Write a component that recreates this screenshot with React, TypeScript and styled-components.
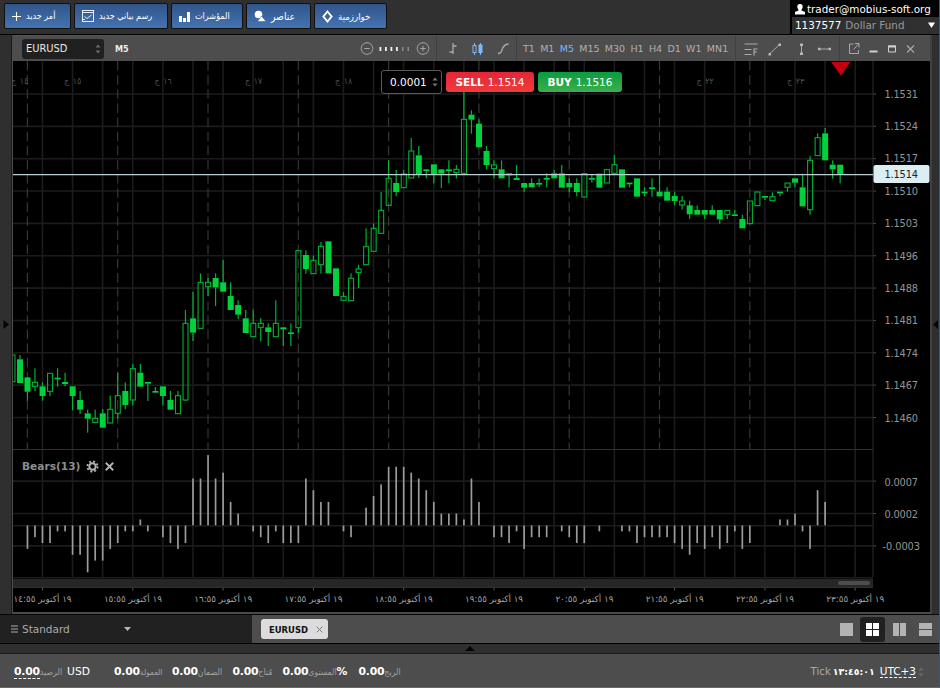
import React from "react";
import styled, { createGlobalStyle } from "styled-components";

const latin = `"DejaVu Sans", Verdana, sans-serif`;
const narrow = `"DejaVu Sans Condensed", "DejaVu Sans", Verdana, sans-serif`;

const Global = createGlobalStyle`
  * { box-sizing: border-box; }
  html, body { margin: 0; padding: 0; background: #2e2e2e; }
  body { font-family: ${latin}; overflow: hidden; }
`;

/* ---------- page shell ---------- */
const Page = styled.div`
  width: 940px; height: 688px; display: flex; flex-direction: column;
  background: #2e2e2e; border-right: 1px solid #2c5c86; border-bottom: 1px solid #3c74a4;
`;
const TopBar = styled.header`
  height: 35px; flex: none; display: flex; justify-content: space-between;
  background: #303030; border-bottom: 1px solid #000;
`;
const ButtonGroup = styled.div`
  display: flex; gap: 3px; padding: 3px 0 0 4px;
`;
const MenuButton = styled.button<{ $w: number; $fs: number; $gap: number }>`
  width: ${(p) => p.$w}px; height: 26px; padding: 0 0 0 7px; display: flex; align-items: center; gap: ${(p) => p.$gap}px;
  border: 1px solid #101010; border-radius: 2px;
  background: linear-gradient(#30558a, #4573b0); color: #fff;
  font: ${(p) => p.$fs}px ${narrow}; font-stretch: condensed; white-space: nowrap;
  svg { flex: none; }
`;
const Account = styled.div`
  width: 149px; display: flex; flex-direction: column; color: #fff; border-left: 2px solid #000;
`;
const AccountMail = styled.div`
  height: 17px; background: #000; display: flex; align-items: center; gap: 2px; padding-left: 3px;
  font-size: 10.4px; white-space: nowrap;
`;
const AccountFund = styled.div`
  flex: 1; display: flex; align-items: center; gap: 4px; padding: 0 4px 2px 3px; font-size: 10.4px; color: #989898;
  b { color: #fff; font-weight: 400; }
  svg { margin-left: auto; }
`;
const Middle = styled.main`
  height: 579px; flex: none; display: flex;
`;
const SideHandle = styled.div<{ $w: number; $line: string }>`
  width: ${(p) => p.$w}px; display: flex; align-items: center; justify-content: center;
  background: #2f2f2f; border-right: 1px solid ${(p) => p.$line};
`;
const ChartWindow = styled.section`
  width: 920px; flex: none; display: flex; flex-direction: column; background: #000;
  border-left: 1px solid #4d4d4d; border-right: 2px solid #404040; border-bottom: 2px solid #4a4a4a;
`;
const ChartHeader = styled.div`
  height: 26px; flex: none; display: flex; background: #4d4d4d; border-top: 1px solid #555;
`;
const HeaderSection = styled.div<{ $w: number }>`
  width: ${(p) => p.$w}px; display: flex; align-items: center; border-right: 1px solid #414141;
  &:last-child { border-right: 0; }
`;
const SymbolSelect = styled.div`
  width: 82px; height: 20px; margin-left: 9px; padding: 0 3px 0 4px; display: flex; align-items: center;
  justify-content: space-between; border-radius: 3px; background: #202020; color: #e8e8e8; font-size: 9.9px;
`;
const Period = styled.span`
  margin-left: 11px; color: #ececec; font: 700 9px ${narrow}; font-stretch: condensed;
`;
const ZoomScale = styled.svg`
  margin: 0 6px 0 auto;
`;
const Timeframe = styled.span<{ $on?: boolean }>`
  color: ${(p) => (p.$on ? "#7fb8f4" : "#b0b0b0")}; font-size: 9.5px;
`;
const Timeframes = styled.div`
  display: flex; gap: 5.3px; padding-left: 6px;
`;
const ChartBody = styled.div`
  position: relative; height: 551px; overflow: hidden;
  > svg { display: block; }
`;
const TradePanel = styled.div`
  position: absolute; left: 368px; top: 9px; display: flex; gap: 4px; align-items: center;
`;
const Volume = styled.div`
  width: 61px; height: 24px; padding: 0 3px 0 8px; display: flex; align-items: center; justify-content: space-between;
  border: 1px solid #5a5a5a; border-radius: 3px; background: #000; color: #fff; font-size: 10.5px;
`;
const TradeButton = styled.button<{ $w: number; $bg: string }>`
  width: ${(p) => p.$w}px; height: 20px; padding: 0; border: 0; border-radius: 3px; background: ${(p) => p.$bg};
  display: flex; align-items: center; justify-content: center; gap: 4px;
  color: #fff; font: 10.5px ${latin};
  b { font-weight: 700; }
`;
const IndicatorLabel = styled.div`
  position: absolute; left: 9px; top: 397px; height: 16px; display: flex; align-items: center; gap: 6px;
  color: #8d8d8d; font: 700 10.6px ${latin};
`;
const TabRow = styled.div`
  height: 30px; flex: none; display: flex; background: #4d4d4d; border-bottom: 1px solid #000; border-top: 1px solid #080808;
`;
const Workspace = styled.div`
  width: 252px; display: flex; align-items: center; padding-left: 11px; background: #212121; color: #aaa; font-size: 10.5px;
  span { margin-left: 4px; width: 102px; }
`;
const ChartTab = styled.div`
  width: 67px; height: 20px; margin: 4px 0 0 9px; padding: 0 5px 0 8px; display: flex; align-items: center;
  justify-content: space-between; border-radius: 3px; background: #dcdcdc; color: #111;
  font: 700 9.4px ${narrow}; font-stretch: condensed;
`;
const LayoutPicker = styled.div`
  margin-left: auto; display: flex; align-items: center; gap: 1px; padding: 0 1px 0 0;
`;
const LayoutOption = styled.div<{ $on?: boolean }>`
  width: 25.3px; height: 25px; display: flex; align-items: center; justify-content: center; border-radius: 3px;
  background: ${(p) => (p.$on ? "#212121" : "transparent")};
`;
const Splitter = styled.div`
  height: 10px; flex: none; display: flex; justify-content: center; align-items: center; background: #2f2f2f; border-bottom: 1px solid #1a1a1a;
`;
const StatusBar = styled.footer`
  flex: 1; display: flex; align-items: center; padding: 2px 15px 0 14px; background: #4d4d4d; color: #fff; font-size: 10.7px;
`;
const Metric = styled.div<{ $w: number }>`
  width: ${(p) => p.$w}px; display: flex; align-items: center; white-space: nowrap;
  b { font: 700 10.8px ${latin}; letter-spacing: -0.2px; }
`;
const MetricName = styled.span<{ $fs: number }>`
  color: #a3a3a3; font: ${(p) => p.$fs}px ${narrow}; font-stretch: condensed; direction: rtl;
`;
const Currency = styled.span`
  margin-left: 5px;
`;
const Underlined = styled.span`
  border-bottom: 1px dashed #fff; line-height: 12px;
`;
const Clock = styled.div`
  margin-left: auto; display: flex; align-items: center; gap: 2px; color: #a8a8a8; font-size: 10.2px;
  b { color: #fff; font: 700 9.4px ${latin}; margin-right: 3px; }
  ${Underlined} { color: #fff; font-size: 10.5px; }
`;

/* ---------- icons ---------- */
const Spinner = ({ c = "#6a6a6a" }: { c?: string }) => (
  <svg width="6" height="10" viewBox="0 0 6 10"><path d="M3 0.5 5.5 3.5h-5zM3 9.5 5.5 6.5h-5z" fill={c} /></svg>
);
const Cross = ({ s, c, w = 1.3 }: { s: number; c: string; w?: number }) => (
  <svg width={s} height={s} viewBox="0 0 8 8"><path d="M.7.7 7.3 7.3M7.3.7.7 7.3" stroke={c} strokeWidth={w} fill="none" /></svg>
);

const menu = [
  { label: "أمر جديد", w: 67, fs: 9, gap: 5, icon: <svg width="9" height="10"><path d="M0 5.5h9M4.500 1v9" stroke="#fff" strokeWidth="1.100" /></svg> },
  { label: "رسم بياني جديد", w: 94, fs: 9, gap: 5, icon: <svg width="12" height="12" fill="none" stroke="#e6eefa"><rect x=".5" y=".5" width="11" height="11" /><path d="M1 2.500h10M2.500 6.500 5 8.500 9.500 5M1 9.500h2" /></svg> },
  { label: "المؤشرات", w: 72, fs: 9, gap: 5, icon: <svg width="11" height="11" fill="#fff"><path d="M0 5h3v6H0zM4 7h3v4H4zM8 1h3v10H8z" /></svg> },
  { label: "عناصر", w: 65, fs: 10.3, gap: 5, icon: <svg width="12" height="12" fill="#fff"><circle cx="4.500" cy="4.500" r="3.800" /><path d="M7.500 6 12 11.500H3.500z" stroke="#3f6ba5" strokeWidth=".6" /></svg> },
  { label: "خوارزمية", w: 73, fs: 9.6, gap: 5, icon: <svg width="11" height="13"><path d="M5.500 1.500 9.600 6.500 5.500 11.500 1.400 6.500z" fill="none" stroke="#fff" strokeWidth="1.900" /></svg> },
];

const metrics = [
  { name: "العمولة", w: 58, fs: 8.4 },
  { name: "الضمان", w: 60.5, fs: 8.8 },
  { name: "مُتاح", w: 50, fs: 8.8 },
  { name: "المستوى", w: 76, fs: 8.6, unit: "%" },
  { name: "الربح", w: 50, fs: 8.8 },
];

/* ---------- chart data ---------- */
const X0 = 27.4;
const STEP = 7.525;
const cx = (i: number) => X0 + STEP * i;

// [high, body top, body bottom, low, hollow]; values are thirds of a pixel below the series base
type Candle = [number, number, number, number, (0 | 1)?];
const series: { from: number; base: number; rows: Candle[] }[] = [
  { from: -2, base: 340, rows: [
    [45,45,125,125,1],[45,58,129,129],[112,112,155,182],[85,127,139,153,1],[127,139,168,182],[100,100,154,168,1],
    [85,113,118,140],[98,126,132,139],[139,139,168,211],[153,180,209,222],[209,220,236,278],[209,235,247,249,1],
    [207,220,263,263],[167,208,249,249,1],[98,167,220,236,1],[127,153,195,208],[72,86,180,196,1],[72,98,140,140],
    [126,126,131,183],[141,153,158,158],[139,139,168,196],[153,180,209,209],[153,167,221,221,1] ] },
  { from: 21, base: 220, rows: [
    [270,310,540,543,1],[216,295,338,363],[160,187,325,325,1],[174,187,200,228,1],[160,174,202,258],[120,187,215,215],
    [187,228,270,270],[241,255,284,297],[270,295,339,339],[269,310,350,350,1],[294,310,322,364,1],[310,322,336,378],
    [241,310,350,350,1],[322,322,328,378],[310,337,342,378],[92,92,323,338,1],[91,105,147,161],[107,121,161,161,1],
    [66,79,134,161,1],[64,64,160,160],[145,145,228,228],[216,229,241,241,1],[160,175,242,242,1],[134,147,158,204,1],
    [25,80,134,134,1],[10,25,94,94,1] ] },
  { from: 47, base: 90, rows: [
    [306,361,430,430,1],[211,265,346,346,1],[240,279,306,319],[240,252,293,293,1],[144,183,264,264,1],[168,196,253,264],
    [238,238,243,265],[223,223,253,280],[238,238,251,294],[211,238,243,280],[225,238,248,265,1],[5,88,250,250,1],
    [61,74,89,131],[88,101,172,172],[168,183,225,238],[211,225,236,265,1],[211,238,265,265],[250,250,256,292],
    [225,264,270,270],[279,279,293,306],[265,279,292,292],[265,279,284,292],[250,264,269,292],[240,250,265,265],
    [225,250,293,293],[265,279,292,306],[265,279,306,319],[251,251,321,321,1],[252,264,269,278],[251,251,293,293] ] },
  { from: 77, base: 110, rows: [
    [179,179,219,219,1],[136,164,190,190,1],[178,178,233,233],[218,218,223,232],[205,205,260,260],[232,245,250,259],
    [205,232,237,260],[191,245,259,259],[232,245,272,272],[245,258,273,286],[258,273,285,299,1],[272,286,313,327],
    [286,300,314,314],[300,300,314,327],[286,300,314,314],[300,300,328,341],[301,301,313,327,1],[300,313,318,318],
    [314,327,355,355],[273,273,341,341,1],[246,246,287,287,1],[258,258,263,270],[247,260,272,272,1],[245,245,250,259],
    [219,219,232,245,1],[205,205,218,232],[191,232,289,289],[138,151,299,314,1],[70,83,137,137,1],[54,70,151,151],
    [151,164,178,206],[164,164,193,220] ] },
];

const bears = [
  -4,-2,-3,-3,-1,-1,-5,-5,-8,-6,-6,-4,-3,-1,-1,1,-1,0,-2,-3,-4,-3,8,8,12,8,9,4,2,0,-1,-2,-3,-1,-3,-3,-3,8,6,4,4,0,-1,-2,0,
  3,5,7,10,10,10,9,8,6,4,2,2,2,1,8,4,0,-2,-2,-3,-1,-4,-2,-2,-2,0,-1,-2,-3,-3,0,-1,0,0,-1,-1,-3,-2,-2,-2,-2,-3,-4,-5,-3,
  -4,-2,-4,-3,-1,-4,-3,0,0,0,1,1,2,-1,-4,6,4,
];

const range = (n: number) => Array.from({ length: n }, (_, k) => k);
const prices = ["1.1531", "1.1524", "1.1517", "1.1510", "1.1503", "1.1496", "1.1488", "1.1481", "1.1474", "1.1467", "1.1460"];
const levels: [string, number][] = [["0.0007", 481.4], ["0.0002", 513.8], ["-0.0003", 546.2]];
const hours = ["١٤:٥٥", "١٥:٥٥", "١٦:٥٥", "١٧:٥٥", "١٨:٥٥", "١٩:٥٥", "٢٠:٥٥", "٢١:٥٥", "٢٢:٥٥", "٢٣:٥٥"];
const days: [string, number][] = [["١٤", 17.5], ["١٥", 70.5], ["١٦", 161], ["١٧", 251.5], ["١٨", 341.5], ["٢٢", 703], ["٢٣", 793.5]];

const AxisText = styled.text<{ $dark?: boolean }>`
  font: 9.8px ${latin}; fill: ${(p) => (p.$dark ? "#222" : "#949494")};
`;
const ArabicText = styled.text`
  font: 8.8px ${narrow}; font-stretch: condensed; fill: #a0a0a0; text-anchor: middle;
`;

const Chart = () => (
  <svg width="917" height="551" viewBox="13 61 917 551">
    <g stroke="#1c1c1c" strokeWidth="1.600">
      {range(28).map((k) => <path key={k} d={`M${42.45 + 30.1 * k} 61V577`} />)}
      {prices.map((p, k) => <path key={p} d={`M13 ${94 + 32.35 * k}H873`} />)}
      {levels.map(([l, y]) => <path key={l} d={`M13 ${y - 0.3}H873`} />)}
      <path d="M13 525.700H873" />
      <path d="M873 61V577" />
    </g>
    <g stroke="#363636" strokeWidth="1.200" strokeDasharray="9.500 4.630">
      {range(9).map((k) => <path key={k} d={`M${cx(12 * k)} 61V449`} />)}
    </g>
    <path d="M13 449.500H873" stroke="#303030" strokeWidth="1.200" />
    <g stroke="#484848">
      {prices.map((p, k) => <path key={p} d={`M873 ${94 + 32.35 * k}h3`} />)}
      {levels.map(([l, y]) => <path key={l} d={`M873 ${y - 0.3}h3`} />)}
    </g>
    {days.map(([d, x]) => (
      <g key={d}>
        <ArabicText x={x + 6.5} y={83.5} fillOpacity={0.5}>{d}</ArabicText>
        <ArabicText x={x - 4} y={84} fillOpacity={0.5}>ج</ArabicText>
      </g>
    ))}
    <g fill="#00d13c">
      {series.map((s) => s.rows.map(([h, t, b, l, hollow], n) => {
        const x = cx(s.from + n);
        const y = (v: number) => s.base + v / 3;
        return (
          <g key={s.from + n}>
            {h < t && <rect x={x - 0.55} y={y(h)} width="1.200" height={(t - h) / 3} fillOpacity=".85" />}
            {l > b && <rect x={x - 0.55} y={y(b)} width="1.200" height={(l - b) / 3} fillOpacity=".85" />}
            {hollow
              ? <rect x={x - 2.4} y={y(t)} width="5" height={(b - t) / 3} fill="none" stroke="#00b033" strokeWidth="1.100" />
              : <rect x={x - 2.9} y={y(t)} width="6" height={(b - t) / 3} />}
          </g>
        );
      }))}
    </g>
    <path d="M13 174.600H873" stroke="#b9cfd1" strokeWidth="1.400" />
    <g fill="#9b9b9b">
      {bears.map((v, i) => v !== 0 && (
        <rect key={i} x={cx(i) - 0.8} y={v > 0 ? 525.3 - v * 5.85 : 525.5} width="1.700" height={Math.abs(v) * 5.85} />
      ))}
    </g>
    {prices.map((p, k) => <AxisText key={p} x={884.5} y={97.6 + 32.4 * k} textLength={33.5}>{p}</AxisText>)}
    {levels.map(([l, y]) => <AxisText key={l} x={l[0] === "-" ? 882.5 : 884.5} y={y + 4.2} textLength={l[0] === "-" ? 37.5 : 33.5}>{l}</AxisText>)}
    <rect x="873.500" y="165" width="56" height="18" rx="2" fill="#dceef1" />
    <AxisText $dark x={884.5} y={178.4} textLength={33.5}>1.1514</AxisText>
    <path d="M831 62h19.500l-9.700 13.500z" fill="#c40010" />
    <rect x="13" y="577" width="860" height="1.200" fill="#1c1c1c" />
    <rect x="13" y="578.700" width="860" height="9" fill="#262626" />
    <rect x="13" y="586.800" width="860" height="1" fill="#363636" />
    <rect x="838" y="581" width="32" height="4" rx="2" fill="#4d4d4d" />
    {hours.map((h, k) => (
      <g key={h}>
        <path d={`M${42.5 + 90.3 * k} 588v2.500`} stroke="#555" />
        <ArabicText x={42.6 + 90.3 * k} y={602} textLength={58} lengthAdjust="spacingAndGlyphs">{`١٩ أكتوبر ${h}`}</ArabicText>
      </g>
    ))}
  </svg>
);

const App = () => (
  <>
    <Global />
    <Page>
      <TopBar>
        <ButtonGroup>
          {menu.map((m) => (
            <MenuButton key={m.label} $w={m.w} $fs={m.fs} $gap={m.gap}>{m.icon}{m.label}</MenuButton>
          ))}
        </ButtonGroup>
        <Account>
          <AccountMail>
            <svg width="10" height="12" fill="#fff"><path d="M5 1a2.700 2.700 0 0 1 2.700 2.800C7.700 5 7.200 5.900 6.600 6.400V7.500L10 9v2.500H0V9l3.400-1.500V6.400C2.800 5.900 2.300 5 2.300 3.800A2.700 2.700 0 0 1 5 1z" /></svg>
            <span>trader@mobius-soft.org</span>
          </AccountMail>
          <AccountFund>
            <b>1137577</b><span>Dollar Fund</span>
            <svg width="7" height="6"><path d="M0 .5h7L3.500 6z" fill="#fff" /></svg>
          </AccountFund>
        </Account>
      </TopBar>
      <Middle>
        <SideHandle $w={12} $line="#1a1a1a">
          <svg width="6" height="9"><path d="M.5 0v9L6 4.500z" fill="#050505" /></svg>
        </SideHandle>
        <ChartWindow>
          <ChartHeader>
            <HeaderSection $w={424}>
              <SymbolSelect>EURUSD<Spinner /></SymbolSelect>
              <Period>M5</Period>
              <ZoomScale width="70" height="14" viewBox="0 0 70 14">
                <g stroke="#a6a6a6" fill="none">
                  <circle cx="7" cy="6.500" r="5.800" /><path d="M4.300 6.500h5.400" />
                  <circle cx="63" cy="6.500" r="5.800" /><path d="M60.300 6.500h5.400M63 3.800v5.400" />
                </g>
                <path d="M19.500 5h1.800v4h-1.800zM25 5h1.800v4h-1.800zM30.500 5h1.800v4h-1.800zM36 5h1.800v4h-1.800z" fill="#f2f2f2" />
                <path d="M42 5h1.500v4h-1.500zM47.500 5h1.500v4h-1.500z" fill="#8a8a8a" />
              </ZoomScale>
            </HeaderSection>
            <HeaderSection $w={80}>
              <svg width="79" height="16" viewBox="0 0 79 16" fill="none">
                <path d="M16 2v11M12.500 11H16M16 5h3.500" stroke="#aaa" strokeWidth="1.300" />
                <path d="M37.500 2v12M43.500 2v12" stroke="#7fb8f4" />
                <rect x="36" y="4.500" width="3" height="7" stroke="#7fb8f4" fill="#4d4d4d" />
                <rect x="41.500" y="3.500" width="4" height="8.500" fill="#7fb8f4" />
                <path d="M61 12.500c5 0 3-3.500 5-6 1.300-2.200 2-3.500 5.500-3.500" stroke="#aaa" strokeWidth="1.300" />
              </svg>
            </HeaderSection>
            <HeaderSection $w={219}>
              <Timeframes>
                {["T1", "M1", "M5", "M15", "M30", "H1", "H4", "D1", "W1", "MN1"].map((t) => (
                  <Timeframe key={t} $on={t === "M5"}>{t}</Timeframe>
                ))}
              </Timeframes>
            </HeaderSection>
            <HeaderSection $w={104}>
              <svg width="103" height="16" viewBox="0 0 103 16" fill="none" stroke="#aaa">
                <path d="M8.500 3h13M8.500 8.500h7M8.500 13.500h7M18 14.500V8h3.500M18 11h3" strokeWidth="1.200" />
                <path d="M34 12.500 43 4M65.500 4v8.500M83 8h11" />
                <path d="M32.500 12h2.500v2.500h-2.500zM42.500 2.500H45V5h-2.500zM64 2.500h3V5h-3zM64 11.500h3V14h-3zM82 6.700h2.500v2.600H82zM92.500 6.700H95v2.600h-2.500z" fill="#b8b8b8" stroke="none" />
              </svg>
            </HeaderSection>
            <HeaderSection $w={90}>
              <svg width="90" height="16" viewBox="0 0 90 16" fill="none" stroke="#aaa">
                <path d="M13.500 3H9.500v9.500h9V9M13.500 8.500l5-5.500M15 2.500h4v4" />
                <path d="M29.500 10.500h8" stroke="#d0d0d0" strokeWidth="2" />
                <path d="M48.500 5h7v6h-7z" stroke="#d0d0d0" /><path d="M48 5.500h8" stroke="#d0d0d0" strokeWidth="2" />
                <path d="M67 4.500l7 7M74 4.500l-7 7" strokeWidth="1.100" />
              </svg>
            </HeaderSection>
          </ChartHeader>
          <ChartBody>
            <Chart />
            <TradePanel>
              <Volume>0.0001<Spinner c="#777" /></Volume>
              <TradeButton $w={88} $bg="linear-gradient(#e32636, #f03b3b)"><b>SELL</b>1.1514</TradeButton>
              <TradeButton $w={84} $bg="linear-gradient(#089c3e, #3fae4c)"><b>BUY</b>1.1516</TradeButton>
            </TradePanel>
            <IndicatorLabel>
              Bears(13)
              <svg width="13" height="13" viewBox="0 0 13 13" fill="none" stroke="#b4b4b4">
                <circle cx="6.500" cy="6.500" r="3.200" strokeWidth="2" />
                <circle cx="6.500" cy="6.500" r="5.100" strokeWidth="1.800" strokeDasharray="2 2.005" />
              </svg>
              <Cross s={9} c="#b4b4b4" w={1.7} />
            </IndicatorLabel>
          </ChartBody>
        </ChartWindow>
        <SideHandle $w={7} $line="#2f2f2f">
          <svg width="5" height="9"><path d="M5 0v9L0 4.500z" fill="#050505" /></svg>
        </SideHandle>
      </Middle>
      <TabRow>
        <Workspace>
          <svg width="7" height="8"><path d="M0 1h7M0 4h7M0 7h7" stroke="#aaa" /></svg>
          <span>Standard</span>
          <svg width="7" height="4"><path d="M0 0h7L3.500 4z" fill="#b8b8b8" /></svg>
        </Workspace>
        <ChartTab>EURUSD<Cross s={7} c="#777" w={1.1} /></ChartTab>
        <LayoutPicker>
          <LayoutOption><svg width="13" height="13"><path d="M0 0h13v13H0z" fill="#b3b3b3" /></svg></LayoutOption>
          <LayoutOption $on><svg width="13" height="13"><path d="M0 0h6v6H0zM7 0h6v6H7zM0 7h6v6H0zM7 7h6v6H7z" fill="#fff" /></svg></LayoutOption>
          <LayoutOption><svg width="13" height="13"><path d="M0 0h6v13H0zM7 0h6v13H7z" fill="#b3b3b3" /></svg></LayoutOption>
          <LayoutOption><svg width="13" height="13"><path d="M0 0h13v6H0zM0 7h13v6H0z" fill="#b3b3b3" /></svg></LayoutOption>
        </LayoutPicker>
      </TabRow>
      <Splitter><svg width="10" height="5"><path d="M0 5h10L5 0z" fill="#050505" /></svg></Splitter>
      <StatusBar>
        <Metric $w={100}><Underlined><b>0.00</b></Underlined><MetricName $fs={8.8}>الرصيد</MetricName><Currency>USD</Currency></Metric>
        {metrics.map((m) => (
          <Metric key={m.name} $w={m.w}><b>0.00</b><MetricName $fs={m.fs}>{m.name}</MetricName>{m.unit && <b>{m.unit}</b>}</Metric>
        ))}
        <Clock>
          Tick<b>١٣:٤٥:٠١</b><Underlined>UTC+3</Underlined><Spinner />
        </Clock>
      </StatusBar>
    </Page>
  </>
);

export default App;
